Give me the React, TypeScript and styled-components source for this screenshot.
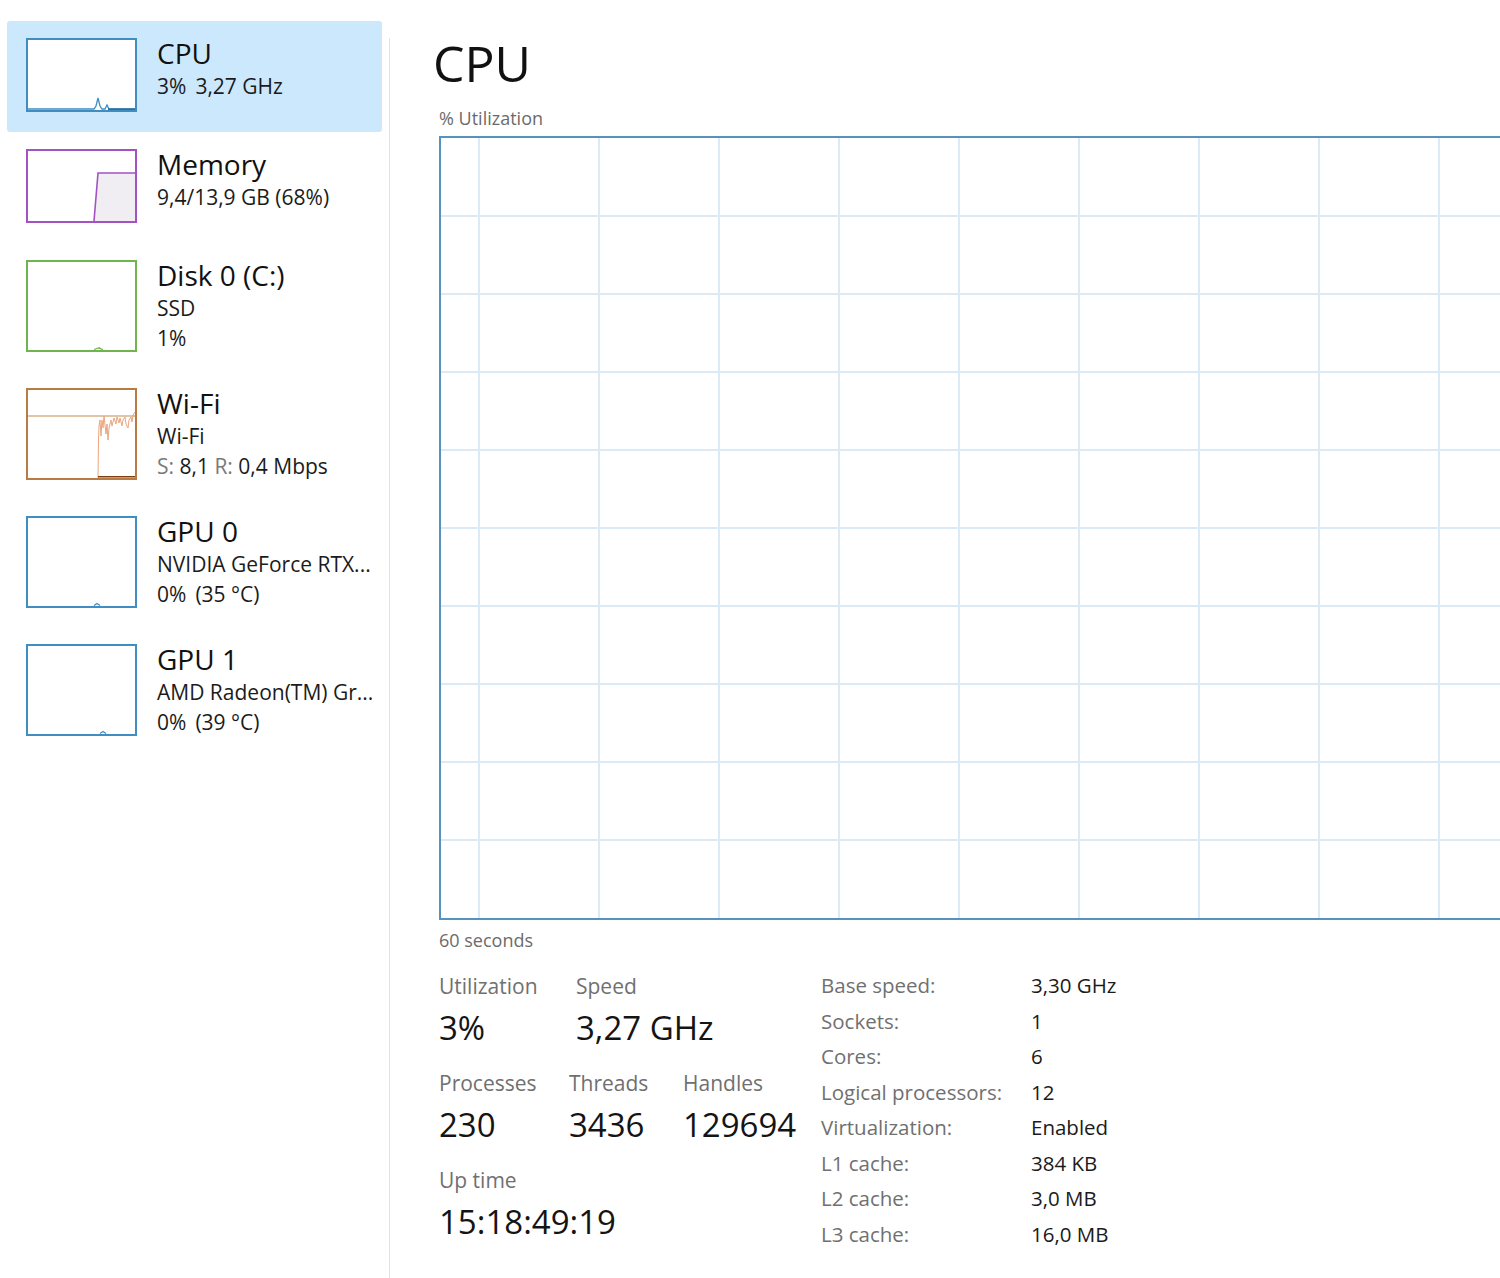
import React from "react";
import styled, { createGlobalStyle } from "styled-components";

const GlobalStyle = createGlobalStyle`
  html, body {
    margin: 0;
    padding: 0;
    background: #ffffff;
    overflow: hidden;
  }
  body {
    font-family: "Open Sans", "Noto Sans", "Liberation Sans", sans-serif;
    color: #1b1b1b;
  }
  #root {
    width: 100vw;
    height: 100vh;
  }
`;

const Page = styled.div`
  display: flex;
  width: 100%;
  height: 100%;
  overflow: hidden;
`;

const Sidebar = styled.nav`
  width: 389px;
  flex-shrink: 0;
  box-sizing: border-box;
  padding: 21px 7px 0 7px;
  display: flex;
  flex-direction: column;
`;

const Divider = styled.div`
  width: 1px;
  flex-shrink: 0;
  margin-top: 38px;
  background: #e2e2e2;
`;

const Item = styled.div<{ $selected?: boolean; $tall?: boolean }>`
  display: flex;
  align-items: flex-start;
  gap: 20px;
  box-sizing: border-box;
  height: ${(p) => (p.$tall ? 128 : 111)}px;
  padding: 17px 0 0 19px;
  border-radius: 3px;
  background: ${(p) => (p.$selected ? "#cce8fc" : "transparent")};
`;

const Thumb = styled.div<{ $color: string; $tall?: boolean }>`
  width: 111px;
  height: ${(p) => (p.$tall ? 92 : 74)}px;
  flex-shrink: 0;
  box-sizing: border-box;
  border: 2px solid ${(p) => p.$color};
  background: #ffffff;
  svg {
    display: block;
    width: 100%;
    height: 100%;
  }
`;

const ItemText = styled.div`
  display: flex;
  flex-direction: column;
  min-width: 0;
`;

const ItemTitle = styled.div`
  font-size: 28px;
  line-height: 30px;
  color: #111111;
  white-space: nowrap;
`;

const SubLines = styled.div`
  margin-top: 3px;
  display: flex;
  flex-direction: column;
`;

const SubLine = styled.div`
  font-size: 21px;
  line-height: 30px;
  color: #1b1b1b;
  white-space: nowrap;
`;

const Dim = styled.span`
  color: #7a7a7a;
`;

const Spaced = styled.span`
  margin-right: 9px;
`;

const Main = styled.main`
  flex: 1;
  min-width: 0;
  overflow: hidden;
  padding: 33px 0 0 49px;
  display: flex;
  flex-direction: column;
`;

const Heading = styled.h1`
  margin: 0 0 0 -6px;
  font-size: 50px;
  line-height: 60px;
  font-weight: 400;
  color: #111111;
`;

const Caption = styled.div<{ $gap: number }>`
  margin-top: ${(p) => p.$gap}px;
  font-size: 18px;
  line-height: 24px;
  color: #6b6b6b;
  white-space: nowrap;
`;

const GraphFrame = styled.div`
  margin-top: 6px;
  width: 1130px;
  height: 784px;
  flex-shrink: 0;
  box-sizing: border-box;
  border: 2px solid #5592bd;
  background: #ffffff;
  svg {
    display: block;
    width: 100%;
    height: 100%;
  }
`;

const Stats = styled.div`
  margin-top: 20px;
  display: flex;
  align-items: flex-start;
`;

const StatBlock = styled.div`
  width: 382px;
  flex-shrink: 0;
  display: flex;
  flex-direction: column;
  gap: 21px;
`;

const StatRow = styled.div`
  display: flex;
`;

const Stat = styled.div<{ $w?: number }>`
  display: flex;
  flex-direction: column;
  width: ${(p) => (p.$w ? `${p.$w}px` : "auto")};
  flex-shrink: 0;
`;

const StatLabel = styled.div`
  font-size: 21px;
  line-height: 28px;
  color: #707070;
  white-space: nowrap;
`;

const StatValue = styled.div`
  margin-top: 8px;
  font-size: 33px;
  line-height: 40px;
  color: #141414;
  white-space: nowrap;
`;

const SpecTable = styled.dl`
  margin: -4px 0 0 0;
  display: grid;
  grid-template-columns: 210px auto;
  font-size: 20.5px;
  line-height: 35.5px;
`;

const SpecKey = styled.dt`
  margin: 0;
  color: #707070;
  white-space: nowrap;
`;

const SpecVal = styled.dd`
  margin: 0;
  color: #1b1b1b;
  white-space: nowrap;
`;

const CPU_C = "#3f8dc1";
const MEM_C = "#a452c2";
const DISK_C = "#6db54c";
const WIFI_C = "#b97a44";

const CpuSpark = () => (
  <svg viewBox="0 0 107 70" preserveAspectRatio="none">
    <polyline
      points="0,69 66,69 68,66 70,58 72,66 74,69 77,69 79,65 81,69 107,69"
      fill="none"
      stroke={CPU_C}
      strokeWidth="1.3"
    />
    <line x1="80" y1="69.2" x2="107" y2="69.2" stroke="#2c6f9c" strokeWidth="1.6" />
  </svg>
);

const MemSpark = () => (
  <svg viewBox="0 0 107 70" preserveAspectRatio="none">
    <polygon points="66,70 70,22 107,22 107,70" fill="#f1eef3" />
    <polyline points="66,70 70,22 107,22" fill="none" stroke={MEM_C} strokeWidth="1.6" />
  </svg>
);

const DiskSpark = () => (
  <svg viewBox="0 0 107 88" preserveAspectRatio="none">
    <polyline
      points="66,87.5 69,86.5 71,85.8 73,86.8 75,87.5"
      fill="none"
      stroke={DISK_C}
      strokeWidth="1.3"
    />
  </svg>
);

const WIFI_NOISE =
  "70,88 70.5,50 71,36 72,30 73,46 74,30 75,38 76,26 78,44 79,34 80,50 81,38 83,30 84,36 86,28 88,34 89,27 91,33 92,28 94,36 95,30 97,27 98,34 100,38 101,30 103,27 104,32 105,25 107,22";

const WifiSpark = () => (
  <svg viewBox="0 0 107 88" preserveAspectRatio="none">
    <line x1="0" y1="26" x2="107" y2="26" stroke="#e2c4a6" strokeWidth="2" />
    <polyline points={WIFI_NOISE} fill="none" stroke="#e9a680" strokeWidth="1" />
    <line x1="70" y1="86.8" x2="107" y2="86.8" stroke="#7a3f12" strokeWidth="1.6" />
  </svg>
);

const GpuSpark = ({ at }: { at: number }) => (
  <svg viewBox="0 0 107 88" preserveAspectRatio="none">
    <polyline
      points={`${at - 3},87.5 ${at},85.5 ${at + 3},87.5`}
      fill="none"
      stroke={CPU_C}
      strokeWidth="1.3"
    />
  </svg>
);

type SideItem = {
  key: string;
  title: string;
  color: string;
  tall: boolean;
  selected?: boolean;
  spark: React.ReactNode;
  lines: React.ReactNode[];
};

const items: SideItem[] = [
  {
    key: "cpu",
    title: "CPU",
    color: CPU_C,
    tall: false,
    selected: true,
    spark: <CpuSpark />,
    lines: [
      <>
        <Spaced>3%</Spaced>3,27 GHz
      </>,
    ],
  },
  {
    key: "mem",
    title: "Memory",
    color: MEM_C,
    tall: false,
    spark: <MemSpark />,
    lines: ["9,4/13,9 GB (68%)"],
  },
  {
    key: "disk",
    title: "Disk 0 (C:)",
    color: DISK_C,
    tall: true,
    spark: <DiskSpark />,
    lines: ["SSD", "1%"],
  },
  {
    key: "wifi",
    title: "Wi-Fi",
    color: WIFI_C,
    tall: true,
    spark: <WifiSpark />,
    lines: [
      "Wi-Fi",
      <>
        <Dim>S:</Dim> 8,1 <Dim>R:</Dim> 0,4 Mbps
      </>,
    ],
  },
  {
    key: "gpu0",
    title: "GPU 0",
    color: CPU_C,
    tall: true,
    spark: <GpuSpark at={69} />,
    lines: [
      "NVIDIA GeForce RTX...",
      <>
        <Spaced>0%</Spaced>(35 °C)
      </>,
    ],
  },
  {
    key: "gpu1",
    title: "GPU 1",
    color: CPU_C,
    tall: true,
    spark: <GpuSpark at={75} />,
    lines: [
      "AMD Radeon(TM) Gr...",
      <>
        <Spaced>0%</Spaced>(39 °C)
      </>,
    ],
  },
];

const GRID_W = 1126;
const GRID_H = 780;

const UtilGraph = () => {
  const verticals: number[] = [];
  for (let x = 38; x < GRID_W; x += 120) verticals.push(x);
  const horizontals: number[] = [];
  for (let i = 1; i < 10; i++) horizontals.push(i * 78);
  return (
    <svg viewBox={`0 0 ${GRID_W} ${GRID_H}`} preserveAspectRatio="none">
      {horizontals.map((y) => (
        <line key={`h${y}`} x1="0" y1={y} x2={GRID_W} y2={y} stroke="#dbeaf4" strokeWidth="2" />
      ))}
      {verticals.map((x) => (
        <line key={`v${x}`} x1={x} y1="0" x2={x} y2={GRID_H} stroke="#dbeaf4" strokeWidth="2" />
      ))}
    </svg>
  );
};

const specs: [string, string][] = [
  ["Base speed:", "3,30 GHz"],
  ["Sockets:", "1"],
  ["Cores:", "6"],
  ["Logical processors:", "12"],
  ["Virtualization:", "Enabled"],
  ["L1 cache:", "384 KB"],
  ["L2 cache:", "3,0 MB"],
  ["L3 cache:", "16,0 MB"],
];

export default function App() {
  return (
    <>
      <GlobalStyle />
      <Page>
        <Sidebar>
          {items.map((it) => (
            <Item key={it.key} $selected={it.selected} $tall={it.tall}>
              <Thumb $color={it.color} $tall={it.tall}>
                {it.spark}
              </Thumb>
              <ItemText>
                <ItemTitle>{it.title}</ItemTitle>
                <SubLines>
                  {it.lines.map((l, i) => (
                    <SubLine key={i}>{l}</SubLine>
                  ))}
                </SubLines>
              </ItemText>
            </Item>
          ))}
        </Sidebar>
        <Divider />
        <Main>
          <Heading>CPU</Heading>
          <Caption $gap={13}>% Utilization</Caption>
          <GraphFrame>
            <UtilGraph />
          </GraphFrame>
          <Caption $gap={8}>60 seconds</Caption>
          <Stats>
            <StatBlock>
              <StatRow>
                <Stat $w={137}>
                  <StatLabel>Utilization</StatLabel>
                  <StatValue>3%</StatValue>
                </Stat>
                <Stat>
                  <StatLabel>Speed</StatLabel>
                  <StatValue>3,27 GHz</StatValue>
                </Stat>
              </StatRow>
              <StatRow>
                <Stat $w={130}>
                  <StatLabel>Processes</StatLabel>
                  <StatValue>230</StatValue>
                </Stat>
                <Stat $w={114}>
                  <StatLabel>Threads</StatLabel>
                  <StatValue>3436</StatValue>
                </Stat>
                <Stat>
                  <StatLabel>Handles</StatLabel>
                  <StatValue>129694</StatValue>
                </Stat>
              </StatRow>
              <StatRow>
                <Stat>
                  <StatLabel>Up time</StatLabel>
                  <StatValue>15:18:49:19</StatValue>
                </Stat>
              </StatRow>
            </StatBlock>
            <SpecTable>
              {specs.map(([k, v]) => (
                <React.Fragment key={k}>
                  <SpecKey>{k}</SpecKey>
                  <SpecVal>{v}</SpecVal>
                </React.Fragment>
              ))}
            </SpecTable>
          </Stats>
        </Main>
      </Page>
    </>
  );
}
